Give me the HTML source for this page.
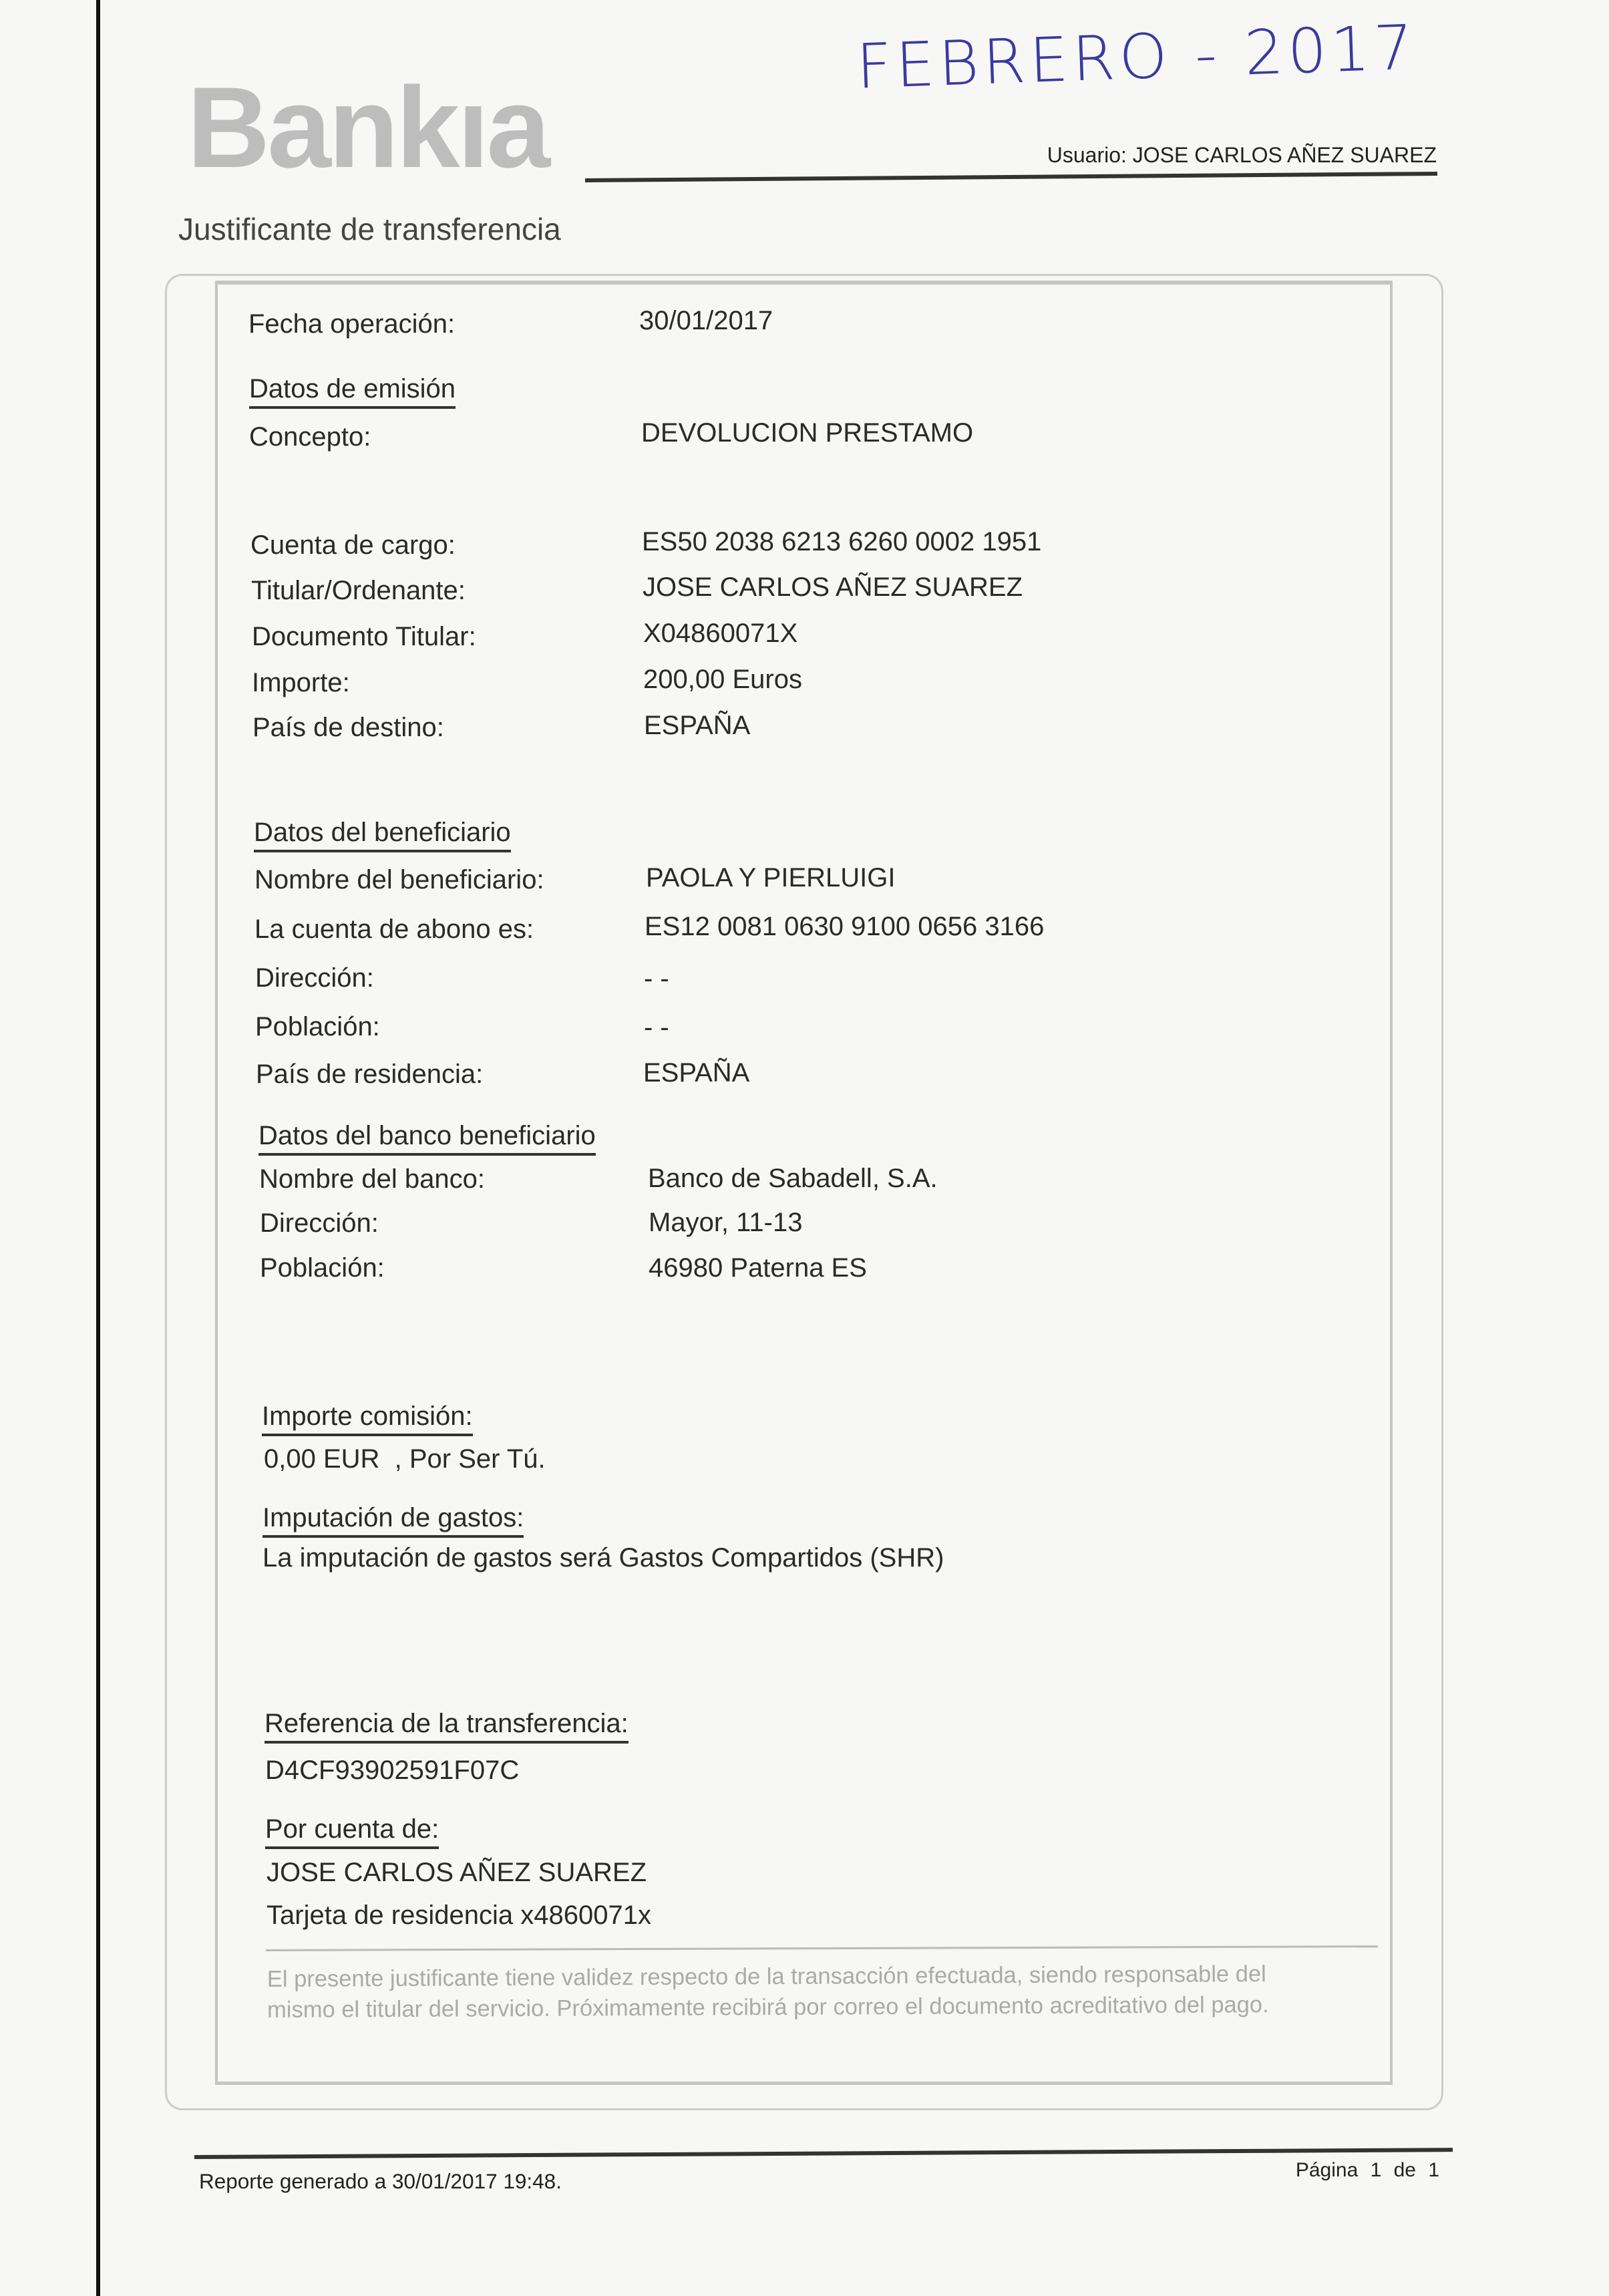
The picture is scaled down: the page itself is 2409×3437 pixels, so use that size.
<!DOCTYPE html>
<html><head><meta charset="utf-8"><style>
html,body{margin:0;padding:0}
body{width:2409px;height:3437px;position:relative;background:#f7f7f6;font-family:"Liberation Sans",Arial,sans-serif;color:#2a2a2a;overflow:hidden}
.a{position:absolute;white-space:nowrap;line-height:1}
.t{font-size:40px}
.h{font-size:40px;padding-bottom:6px;border-bottom:4px solid #333}
.ln{position:absolute;background:#333}
</style></head><body>
<div class="ln" style="left:144px;top:0;width:6px;height:3437px;background:#111"></div>
<div class="a" style="left:280px;top:105px;font-size:172px;color:#bdbdbd;letter-spacing:-4px;font-weight:bold">Bankıa</div>
<div class="a" style="left:1282px;top:40px;font-size:92px;color:#3a3aa0;font-family:'DejaVu Sans',sans-serif;letter-spacing:6px;font-weight:200;transform:rotate(-2deg)">FEBRERO - 2017</div>
<div class="a" style="right:258px;top:216px;font-size:32px;color:#222">Usuario: JOSE CARLOS AÑEZ SUAREZ</div>
<div class="ln" style="left:876px;top:267px;width:1276px;height:6px;transform:rotate(-0.45deg);transform-origin:left"></div>
<div class="a" style="left:267px;top:320px;font-size:46px;color:#444">Justificante de transferencia</div>
<div style="position:absolute;left:247px;top:410px;width:1908px;height:2743px;border:3px solid #ccc;border-radius:26px"></div>
<div style="position:absolute;left:322px;top:420px;width:1755px;height:2690px;border:4px solid #c4c4c4;border-top-width:6px;border-bottom-width:5px"></div>
<div class="a t" style="left:372px;top:465px">Fecha operación:</div><div class="a t" style="left:957px;top:460px">30/01/2017</div>
<div class="a h" style="left:373px;top:562px">Datos de emisión</div>
<div class="a t" style="left:373px;top:634px">Concepto:</div><div class="a t" style="left:960px;top:628px">DEVOLUCION PRESTAMO</div>
<div class="a t" style="left:375px;top:796px">Cuenta de cargo:</div><div class="a t" style="left:961px;top:791px">ES50 2038 6213 6260 0002 1951</div>
<div class="a t" style="left:376px;top:864px">Titular/Ordenante:</div><div class="a t" style="left:962px;top:859px">JOSE CARLOS AÑEZ SUAREZ</div>
<div class="a t" style="left:377px;top:933px">Documento Titular:</div><div class="a t" style="left:963px;top:928px">X04860071X</div>
<div class="a t" style="left:377px;top:1002px">Importe:</div><div class="a t" style="left:963px;top:997px">200,00 Euros</div>
<div class="a t" style="left:378px;top:1069px">País de destino:</div><div class="a t" style="left:964px;top:1066px">ESPAÑA</div>
<div class="a h" style="left:380px;top:1226px">Datos del beneficiario</div>
<div class="a t" style="left:381px;top:1297px">Nombre del beneficiario:</div><div class="a t" style="left:967px;top:1294px">PAOLA Y PIERLUIGI</div>
<div class="a t" style="left:381px;top:1371px">La cuenta de abono es:</div><div class="a t" style="left:965px;top:1367px">ES12 0081 0630 9100 0656 3166</div>
<div class="a t" style="left:382px;top:1444px">Dirección:</div><div class="a t" style="left:964px;top:1445px">- -</div>
<div class="a t" style="left:382px;top:1517px">Población:</div><div class="a t" style="left:964px;top:1518px">- -</div>
<div class="a t" style="left:383px;top:1588px">País de residencia:</div><div class="a t" style="left:963px;top:1586px">ESPAÑA</div>
<div class="a h" style="left:387px;top:1680px">Datos del banco beneficiario</div>
<div class="a t" style="left:388px;top:1745px">Nombre del banco:</div><div class="a t" style="left:970px;top:1744px">Banco de Sabadell, S.A.</div>
<div class="a t" style="left:389px;top:1811px">Dirección:</div><div class="a t" style="left:971px;top:1810px">Mayor, 11-13</div>
<div class="a t" style="left:389px;top:1878px">Población:</div><div class="a t" style="left:971px;top:1878px">46980 Paterna ES</div>
<div class="a h" style="left:392px;top:2100px">Importe comisión:</div>
<div class="a t" style="left:395px;top:2164px">0,00 EUR &nbsp;, Por Ser Tú.</div>
<div class="a h" style="left:393px;top:2252px">Imputación de gastos:</div>
<div class="a t" style="left:393px;top:2312px">La imputación de gastos será Gastos Compartidos (SHR)</div>
<div class="a h" style="left:396px;top:2560px">Referencia de la transferencia:</div>
<div class="a t" style="left:397px;top:2630px">D4CF93902591F07C</div>
<div class="a h" style="left:397px;top:2718px">Por cuenta de:</div>
<div class="a t" style="left:399px;top:2783px">JOSE CARLOS AÑEZ SUAREZ</div>
<div class="a t" style="left:399px;top:2847px">Tarjeta de residencia x4860071x</div>
<div class="ln" style="left:398px;top:2918px;width:1665px;height:3px;background:#bbb;transform:rotate(-0.2deg);transform-origin:left"></div>
<div class="a" style="left:400px;top:2940px;font-size:34.5px;color:#aaa;line-height:46px;transform:rotate(-0.3deg);transform-origin:left">El presente justificante tiene validez respecto de la transacción efectuada, siendo responsable del<br>mismo el titular del servicio. Próximamente recibirá por correo el documento acreditativo del pago.</div>
<div class="ln" style="left:291px;top:3226px;width:1884px;height:6px;transform:rotate(-0.33deg);transform-origin:left"></div>
<div class="a" style="left:298px;top:3250px;font-size:31.5px;color:#222">Reporte generado a 30/01/2017 19:48.</div>
<div class="a" style="right:254px;top:3234px;font-size:30px;color:#222;word-spacing:10px">Página 1 de 1</div>
</body></html>
